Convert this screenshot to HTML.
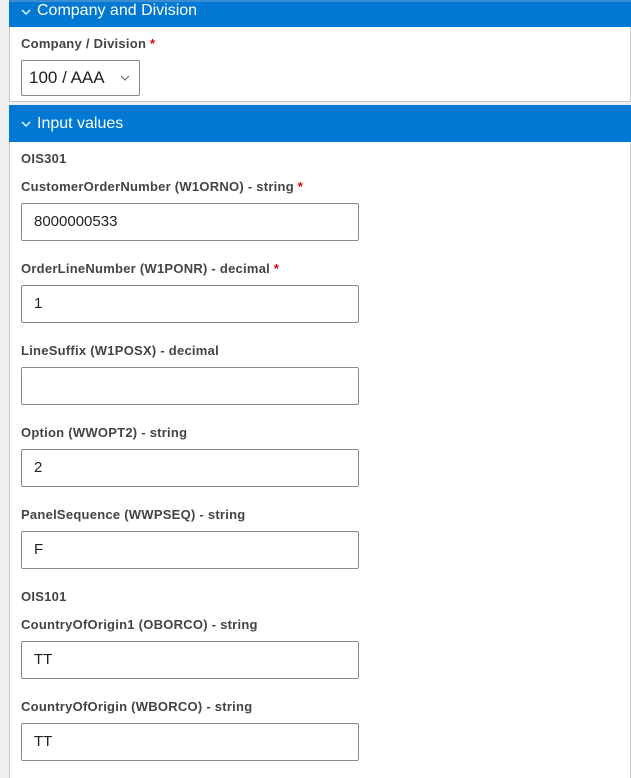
<!DOCTYPE html>
<html><head><style>
*{margin:0;padding:0;box-sizing:border-box}
body{width:631px;height:778px;background:#f0f0f0;font-family:"Liberation Sans",sans-serif;position:relative;overflow:hidden}
.p{position:absolute;left:9px;right:0;background:#fff;border:1px solid #c8c8c8}
.h{position:absolute;left:9px;right:0;background:#0078d4;color:#fff;font-size:16px;line-height:37px;padding-left:28px}
.h svg{position:absolute;left:12px;top:50%;margin-top:-3px}
.l{position:absolute;left:21px;font-size:13px;letter-spacing:0.25px;font-weight:bold;color:#444}
.s{color:#d00}
.i{position:absolute;left:21px;width:338px;height:38px;border:1px solid #8a8a8a;border-radius:2px;font-size:15px;color:#222;padding-left:12px;line-height:36px;background:#fff}
</style></head><body>
<div class="p" style="top:0;height:102px"></div>
<div class="h" style="top:0;height:27px;line-height:17px;border-top:2px solid #3b8fd0"><svg width="10" height="6" viewBox="0 0 10 6" style="margin-top:-6px"><path d="M1 1L5 5L9 1" stroke="#fff" fill="none" stroke-width="1.3"/></svg>Company and Division</div>
<div class="l" style="top:36px">Company / Division <span class="s">*</span></div>
<div class="i" style="top:60px;width:119px;height:36px;font-size:17px;line-height:34px;padding-left:7px">100 / AAA<svg width="10" height="6" viewBox="0 0 10 6" style="position:absolute;left:98px;top:14px"><path d="M1 1L5 5L9 1" stroke="#666" fill="none" stroke-width="1"/></svg></div>
<div class="p" style="top:105px;bottom:0;border-bottom:none"></div>
<div class="h" style="top:105px;height:37px"><svg width="10" height="6" viewBox="0 0 10 6"><path d="M1 1L5 5L9 1" stroke="#fff" fill="none" stroke-width="1.3"/></svg>Input values</div>
<div class="l" style="top:151px">OIS301</div>
<div class="l" style="top:179px">CustomerOrderNumber (W1ORNO) - string <span class="s">*</span></div>
<div class="i" style="top:203px">8000000533</div>
<div class="l" style="top:261px">OrderLineNumber (W1PONR) - decimal <span class="s">*</span></div>
<div class="i" style="top:285px">1</div>
<div class="l" style="top:343px">LineSuffix (W1POSX) - decimal</div>
<div class="i" style="top:367px"></div>
<div class="l" style="top:425px">Option (WWOPT2) - string</div>
<div class="i" style="top:449px">2</div>
<div class="l" style="top:507px">PanelSequence (WWPSEQ) - string</div>
<div class="i" style="top:531px">F</div>
<div class="l" style="top:589px">OIS101</div>
<div class="l" style="top:617px">CountryOfOrigin1 (OBORCO) - string</div>
<div class="i" style="top:641px">TT</div>
<div class="l" style="top:699px">CountryOfOrigin (WBORCO) - string</div>
<div class="i" style="top:723px">TT</div>
</body></html>
